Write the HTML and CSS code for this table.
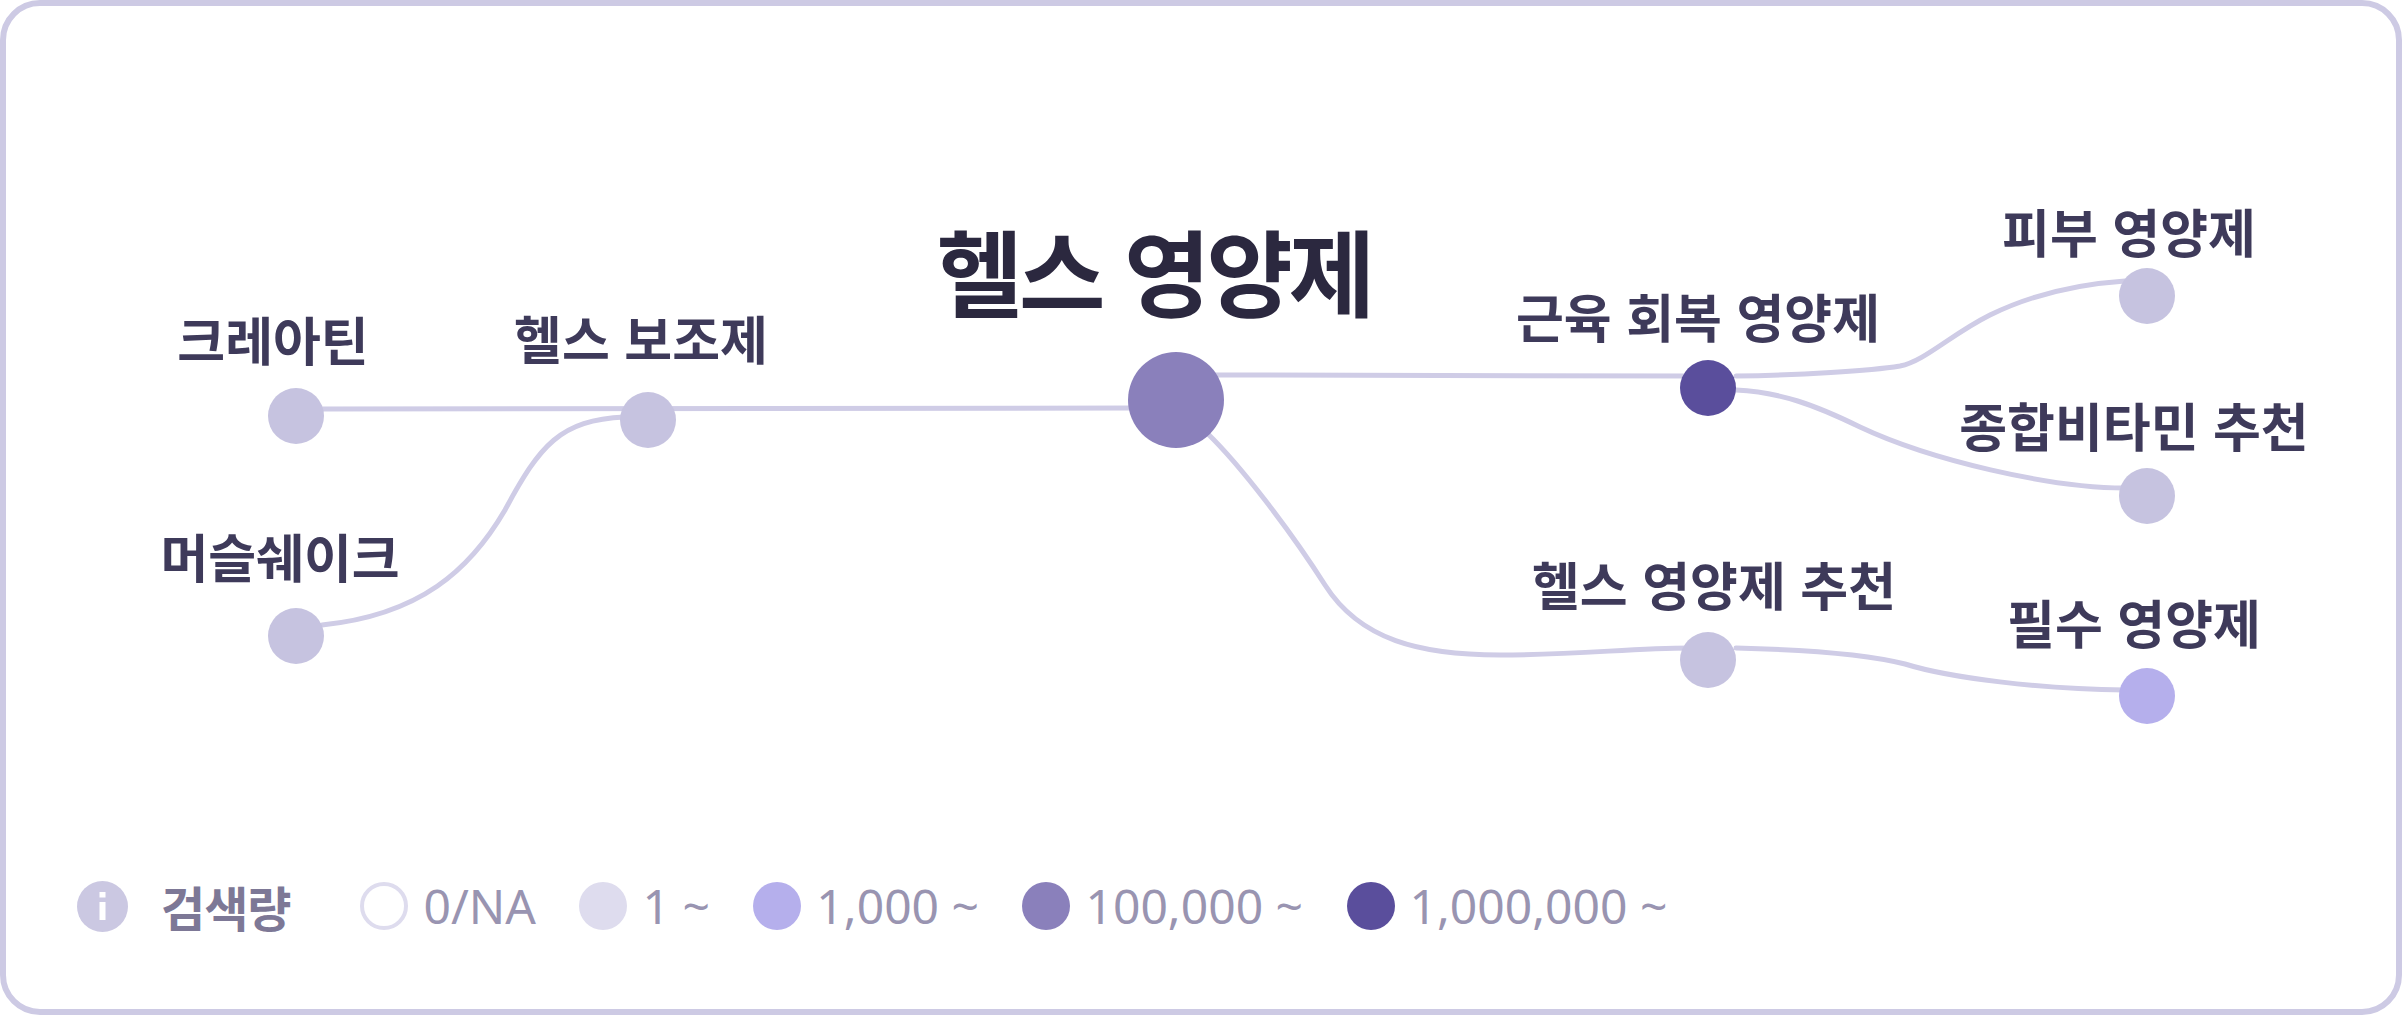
FILE: index.html
```html
<!DOCTYPE html>
<html lang="ko">
<head>
<meta charset="utf-8">
<title>헬스 영양제</title>
<link rel="stylesheet" href="styles.css">
</head>
<body>
<div class="card">
  <div class="canvas">
    <svg class="graph" viewBox="6 6 2390 850" width="2390" height="850" xmlns="http://www.w3.org/2000/svg">
      <g class="edges">
        <path d="M 320 409 L 1135 408"/>
        <path d="M 322 625 C 420 615, 470 570, 505 510 C 540 445, 560 420, 625 417"/>
        <path d="M 1215 375 L 1690 376"/>
        <path d="M 1736 376 C 1800 375, 1870 371, 1900 366 C 1925 361, 1950 335, 1990 315 C 2035 293, 2080 284, 2125 281"/>
        <path d="M 1736 390 C 1780 392, 1815 405, 1860 427 C 1930 460, 2050 488, 2125 488"/>
        <path d="M 1208 434 C 1240 465, 1290 530, 1325 585 C 1360 640, 1420 655, 1500 655 C 1580 655, 1630 648, 1690 648"/>
        <path d="M 1736 648 C 1820 650, 1870 655, 1905 664 C 1950 678, 2040 689, 2125 690"/>
      </g>
      <g class="nodes">
        <circle class="n-1" cx="296" cy="416" r="28"/>
        <circle class="n-1" cx="296" cy="636" r="28"/>
        <circle class="n-1" cx="648" cy="420" r="28"/>
        <circle class="n-100k" cx="1176" cy="400" r="48"/>
        <circle class="n-1m" cx="1708" cy="388" r="28"/>
        <circle class="n-1" cx="1708" cy="660" r="28"/>
        <circle class="n-1" cx="2147" cy="296" r="28"/>
        <circle class="n-1" cx="2147" cy="496" r="28"/>
        <circle class="n-1k" cx="2147" cy="696" r="28"/>
      </g>
      <g class="labels">
        <text class="lbl" x="273" y="338">크레아틴</text>
        <text class="lbl" x="641" y="337">헬스 보조제</text>
        <text class="lbl" x="280" y="555">머슬쉐이크</text>
        <text class="lbl lbl-main" x="1154" y="269">헬스 영양제</text>
        <text class="lbl" x="1698" y="315">근육 회복 영양제</text>
        <text class="lbl" x="1714" y="583">헬스 영양제 추천</text>
        <text class="lbl" x="2129" y="230">피부 영양제</text>
        <text class="lbl" x="2134" y="424">종합비타민 추천</text>
        <text class="lbl" x="2134" y="621">필수 영양제</text>
      </g>
    </svg>
  </div>
  <div class="legend">
    <span class="info">
      <svg viewBox="0 0 51 51" width="51" height="51" xmlns="http://www.w3.org/2000/svg">
        <circle cx="25.5" cy="25.5" r="25.5" class="info-bg"/>
        <rect x="22.5" y="11" width="6" height="5.5" class="info-fg"/>
        <rect x="22.5" y="21" width="6" height="18" class="info-fg"/>
      </svg>
    </span>
    <span class="legend-title">검색량</span>
    <div class="legend-items">
      <span class="item"><span class="dot dot-none"></span><span class="num">0/NA</span></span>
      <span class="item"><span class="dot dot-1"></span><span class="num">1 ~</span></span>
      <span class="item"><span class="dot dot-1k"></span><span class="num">1,000 ~</span></span>
      <span class="item"><span class="dot dot-100k"></span><span class="num">100,000 ~</span></span>
      <span class="item"><span class="dot dot-1m"></span><span class="num">1,000,000 ~</span></span>
    </div>
  </div>
</div>
</body>
</html>
```
FILE: styles.css
```css
html, body {
  margin: 0;
  padding: 0;
  background: #ffffff;
}

.card {
  box-sizing: border-box;
  width: 2402px;
  height: 1015px;
  border: 6px solid #cdcae4;
  border-radius: 40px;
  background: #ffffff;
  display: flex;
  flex-direction: column;
  overflow: hidden;
}

.canvas {
  position: relative;
  height: 850px;
  flex: none;
}

.graph {
  display: block;
}

.edges path {
  fill: none;
  stroke: #cfcce6;
  stroke-width: 5;
  stroke-linecap: round;
}

.n-1 { fill: #c6c3e0; }
.n-1k { fill: #b5afec; }
.n-100k { fill: #8a80bb; }
.n-1m { fill: #5a4e9c; }

.lbl {
  font-family: "Noto Sans CJK KR", "Noto Sans", sans-serif;
  font-weight: 700;
  font-size: 52px;
  letter-spacing: 0px;
  fill: #3e3a5a;
  text-anchor: middle;
  dominant-baseline: central;
}

.lbl-main {
  font-size: 94px;
  letter-spacing: -4px;
  fill: #2b283f;
}

.legend {
  height: 100px;
  flex: none;
  display: flex;
  align-items: center;
  padding-left: 71px;
}

.info {
  display: block;
  width: 51px;
  height: 51px;
  margin-right: 33px;
}

.info svg {
  display: block;
}

.info-bg { fill: #cbc8e2; }
.info-fg { fill: #ffffff; }

.legend-title {
  font-family: "Noto Sans CJK KR", sans-serif;
  font-weight: 700;
  font-size: 48px;
  letter-spacing: -1px;
  color: #7d7896;
  margin-right: 70px;
}

.legend-items {
  display: flex;
  align-items: center;
  gap: 43.5px;
}

.item {
  display: flex;
  align-items: center;
  gap: 15px;
}

.dot {
  display: block;
  box-sizing: border-box;
  width: 48px;
  height: 48px;
  border-radius: 50%;
}

.dot-none { border: 4.5px solid #dedcee; background: #ffffff; }
.dot-1 { background: #dedcee; }
.dot-1k { background: #b5afec; }
.dot-100k { background: #8a80bb; }
.dot-1m { background: #5a4e9c; }

.num {
  font-family: "Noto Sans", sans-serif;
  font-weight: 400;
  font-size: 48px;
  line-height: 1;
  color: #9994b1;
}
```
